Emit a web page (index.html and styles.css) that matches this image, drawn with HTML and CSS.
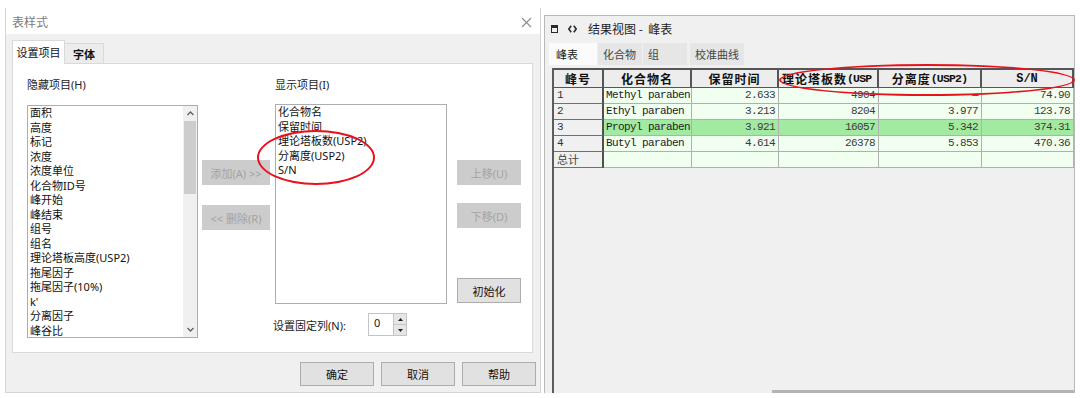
FILE: index.html
```html
<!DOCTYPE html>
<html lang="zh-CN">
<head>
  <meta charset="UTF-8" />
  <title>表样式 / 结果视图</title>
  <link rel="stylesheet" href="styles.css">
</head>
<body>
  <div class="shot">
    <div class="dialog">
      <div class="dlg-title">
        <span>表样式</span>
        <svg class="close" width="11" height="11" viewBox="0 0 11 11"><path d="M1 1L10 10M10 1L1 10" stroke="#8c8c8c" stroke-width="1.1" fill="none"/></svg>
      </div>
      <div class="dlg-body">
        <div class="tabs">
          <div class="tab active">设置项目</div>
          <div class="tab tab-font">字体</div>
        </div>
        <div class="panel">
          <div class="col col-hidden">
            <div class="lbl">隐藏项目(H)</div>
            <div class="listbox hidden-list">
              <ul class="items">
                <li>面积</li>
                <li>高度</li>
                <li>标记</li>
                <li>浓度</li>
                <li>浓度单位</li>
                <li>化合物ID号</li>
                <li>峰开始</li>
                <li>峰结束</li>
                <li>组号</li>
                <li>组名</li>
                <li>理论塔板高度(USP2)</li>
                <li>拖尾因子</li>
                <li>拖尾因子(10%)</li>
                <li>k'</li>
                <li>分离因子</li>
                <li>峰谷比</li>
              </ul>
              <div class="vscroll">
                <span class="arr"><svg width="7" height="5" viewBox="0 0 7 5"><path d="M0.5 4L3.5 1L6.5 4" stroke="#606060" stroke-width="1.3" fill="none"/></svg></span>
                <span class="thumb"></span>
                <span class="arr arr-down"><svg width="7" height="5" viewBox="0 0 7 5"><path d="M0.5 1L3.5 4L6.5 1" stroke="#606060" stroke-width="1.3" fill="none"/></svg></span>
              </div>
            </div>
          </div>

          <div class="col col-move">
            <button class="btn btn-off">添加(A) &gt;&gt;</button>
            <button class="btn btn-off btn-del">&lt;&lt; 删除(R)</button>
          </div>

          <div class="col col-shown">
            <div class="lbl">显示项目(I)</div>
            <div class="listbox shown-list">
              <ul class="items">
                <li>化合物名</li>
                <li>保留时间</li>
                <li>理论塔板数(USP2)</li>
                <li>分离度(USP2)</li>
                <li>S/N</li>
              </ul>
              <div class="mark mark-list"></div>
            </div>
            <div class="fixed-row">
              <span class="fixed-lbl">设置固定列(N):</span>
              <div class="spin">
                <span class="spin-val">0</span>
                <div class="spin-btns">
                  <span><svg width="5" height="3" viewBox="0 0 5 3"><path d="M0 3L2.5 0L5 3Z" fill="#222"/></svg></span>
                  <span><svg width="5" height="3" viewBox="0 0 5 3"><path d="M0 0L2.5 3L5 0Z" fill="#222"/></svg></span>
                </div>
              </div>
            </div>
          </div>

          <div class="col col-order">
            <button class="btn btn-off">上移(U)</button>
            <button class="btn btn-off btn-down">下移(D)</button>
            <button class="btn btn-init">初始化</button>
          </div>
        </div>
        <div class="dlg-foot">
          <button class="btn btn-foot">确定</button>
          <button class="btn btn-foot">取消</button>
          <button class="btn btn-foot">帮助</button>
        </div>
      </div>
    </div>

    <div class="results">
      <div class="res-title">
        <span class="win-icon"></span>
        <svg class="code-icon" width="9" height="8" viewBox="0 0 9 8"><path d="M3.2 0.8L0.8 4L3.2 7.2M5.8 0.8L8.2 4L5.8 7.2" stroke="#2a2a2a" stroke-width="1.6" fill="none"/></svg>
        <span class="res-name">结果视图 -&nbsp; 峰表</span>
      </div>
      <div class="res-tabs">
        <div class="rtab active">峰表</div>
        <div class="rtab">化合物</div>
        <div class="rtab">组</div>
        <div class="rtab rtab-cal">校准曲线</div>
      </div>
      <div class="grid-area">
        <div class="peak-table">
          <div class="trow thead">
            <div class="hc">峰号</div>
            <div class="hc">化合物名</div>
            <div class="hc">保留时间</div>
            <div class="hc hc-clip">理论塔板数<span class="lat">(USP</span></div>
            <div class="hc">分离度<span class="lat">(USP2)</span></div>
            <div class="hc"><span class="lat lat-sn">S/N</span></div>
          </div>
          <div class="trow">
            <div class="rh">1</div>
            <div class="dc name">Methyl paraben</div>
            <div class="dc">2.633</div>
            <div class="dc">4904</div>
            <div class="dc">—</div>
            <div class="dc">74.90</div>
          </div>
          <div class="trow">
            <div class="rh">2</div>
            <div class="dc name">Ethyl paraben</div>
            <div class="dc">3.213</div>
            <div class="dc">8204</div>
            <div class="dc">3.977</div>
            <div class="dc">123.78</div>
          </div>
          <div class="trow sel">
            <div class="rh">3</div>
            <div class="dc name">Propyl paraben</div>
            <div class="dc">3.921</div>
            <div class="dc">16057</div>
            <div class="dc">5.342</div>
            <div class="dc">374.31</div>
          </div>
          <div class="trow">
            <div class="rh">4</div>
            <div class="dc name">Butyl paraben</div>
            <div class="dc">4.614</div>
            <div class="dc">26378</div>
            <div class="dc">5.853</div>
            <div class="dc">470.36</div>
          </div>
          <div class="trow total">
            <div class="rh rh-cjk">总计</div>
            <div class="dc"></div>
            <div class="dc"></div>
            <div class="dc"></div>
            <div class="dc"></div>
            <div class="dc"></div>
          </div>
          <div class="mark mark-head"></div>
        </div>
        <div class="hscroll"></div>
      </div>
    </div>
  </div>
</body>
</html>
```

FILE: styles.css
```css
* {
  box-sizing: border-box;
}
body {
  margin: 0;
  background: #fff;
  font-family: "Noto Sans", "Noto Sans CJK SC", sans-serif;
  font-size: 11px;
  color: #1a1a1a;
}
ul {
  margin: 0;
  padding: 0;
  list-style: none;
}
.shot {
  display: flex;
  align-items: flex-start;
  width: 1080px;
  height: 398px;
  overflow: hidden;
}

/* ---- 表样式 dialog ---- */
.dialog {
  margin: 8px 0 0 5px;
  width: 536px;
  height: 385px;
  border: 1px solid #d4d4d4;
  border-top: none;
  display: flex;
  flex-direction: column;
}
.dlg-title {
  height: 26px;
  background: #fff;
  display: flex;
  align-items: center;
  padding: 2px 8px 0 6px;
  color: #7c7c7c;
  font-size: 12px;
}
.dlg-title .close {
  margin-left: auto;
}
.dlg-body {
  flex: 1;
  background: #f0f0f0;
  padding: 6px 6px 0 6px;
}
.tabs {
  display: flex;
  align-items: flex-end;
  height: 23px;
}
.tab {
  height: 20px;
  display: flex;
  align-items: center;
  justify-content: center;
  border: 1px solid #d9d9d9;
  border-bottom: none;
  color: #111;
}
.tab.active {
  width: 53px;
  height: 24px;
  margin-bottom: -1px;
  background: #fff;
  position: relative;
  z-index: 1;
  padding-bottom: 2px;
}
.tab-font {
  width: 39px;
  border-left: none;
  background: #ececec;
  font-weight: 600;
}
.panel {
  width: 521px;
  height: 290px;
  background: #fff;
  border: 1px solid #d9d9d9;
  padding: 14px 0 0 14px;
  display: flex;
  align-items: flex-start;
}
.col {
  display: flex;
  flex-direction: column;
}
.lbl {
  height: 14px;
  line-height: 14px;
  color: #222;
}
.listbox {
  border: 1px solid #abadb3;
  background: #fff;
  display: flex;
  position: relative;
}
.items {
  flex: 1;
  padding: 0 0 0 2px;
}
.items li {
  height: 14.5px;
  line-height: 14.5px;
  white-space: nowrap;
  color: #111;
}
.col-hidden {
  width: 171px;
}
.hidden-list {
  margin-top: 13px;
  height: 233px;
}
.vscroll {
  width: 14px;
  background: #f0f0f0;
  display: flex;
  flex-direction: column;
  align-items: center;
}
.arr {
  height: 15px;
  display: flex;
  align-items: center;
  justify-content: center;
}
.arr-down {
  margin-top: auto;
}
.thumb {
  width: 12px;
  height: 73px;
  background: #cdcdcd;
}
.btn {
  height: 25px;
  padding: 0;
  border: 1px solid #adadad;
  background: #e1e1e1;
  font-family: inherit;
  font-size: 11px;
  color: #111;
}
.btn-off {
  border-color: #cccccc;
  background: #cccccc;
  color: #a3a3a3;
}
.col-move {
  width: 68px;
  margin-left: 4px;
  padding-top: 82px;
}
.btn-del {
  margin-top: 20px;
}
.col-shown {
  width: 172px;
  margin-left: 5px;
}
.shown-list {
  margin-top: 12px;
  height: 200px;
}
.mark {
  position: absolute;
  border: 2px solid #e8121c;
  border-radius: 50%;
  pointer-events: none;
}
.mark-list {
  left: -19px;
  top: 25px;
  width: 118px;
  height: 55px;
}
.fixed-row {
  margin: 9px 0 0 -2px;
  display: flex;
  align-items: center;
  height: 23px;
}
.fixed-lbl {
  width: 95px;
  color: #222;
}
.spin {
  display: flex;
  height: 23px;
}
.spin-val {
  width: 25px;
  border: 1px solid #c4c4c4;
  border-right: none;
  background: #fff;
  padding: 1px 0 0 5px;
  line-height: 16px;
}
.spin-btns {
  width: 14px;
  display: flex;
  flex-direction: column;
  border: 1px solid #c4c4c4;
  background: #e6e6e6;
}
.spin-btns span {
  flex: 1;
  display: flex;
  align-items: center;
  justify-content: center;
}
.spin-btns span + span {
  border-top: 1px solid #c4c4c4;
}
.col-order {
  width: 64px;
  margin-left: 10px;
  padding-top: 82px;
}
.btn-down {
  margin-top: 18px;
}
.btn-init {
  margin-top: 50px;
}
.dlg-foot {
  margin: 9px -2px 0 0;
  display: flex;
  justify-content: flex-end;
  gap: 7px;
}
.btn-foot {
  width: 74px;
  height: 24px;
}

/* ---- 结果视图 ---- */
.results {
  margin: 15px 0 0 3px;
  width: 531px;
  height: 378px;
  background: #f0f0f0;
  border: 1px solid #b9b9b9;
  border-bottom: none;
  display: flex;
  flex-direction: column;
  font-family: "Liberation Mono", "Noto Sans CJK SC", monospace;
}
.res-title {
  height: 25px;
  display: flex;
  align-items: center;
  padding-left: 6px;
  font-family: "Noto Sans CJK SC", sans-serif;
  font-size: 12px;
  color: #1e1e1e;
}
.win-icon {
  width: 7px;
  height: 8px;
  border: 1px solid #2a2a2a;
  border-top-width: 3px;
}
.code-icon {
  margin-left: 10px;
}
.res-name {
  margin-left: 11px;
}
.res-tabs {
  margin-top: 2px;
  height: 22px;
  padding-left: 4px;
  display: flex;
  font-family: "Noto Sans CJK SC", sans-serif;
  font-size: 11px;
}
.rtab {
  width: 44px;
  margin-left: 1px;
  padding-left: 5px;
  display: flex;
  align-items: center;
  background: #e6e6e6;
  color: #444;
}
.rtab.active {
  width: 48px;
  margin-left: 0;
  padding-left: 7px;
  background: #fbfbfb;
  color: #222;
}
.rtab-cal {
  width: 54px;
  margin-left: 3px;
}
.grid-area {
  flex: 1;
  margin: 3px 0 0 7px;
  border-left: 2px solid #5c5c5c;
  display: flex;
  flex-direction: column;
}
.peak-table {
  width: 520px;
  position: relative;
}
.trow {
  display: grid;
  grid-template-columns: 50px 88px 87px 100px 103px 92px;
  height: 16px;
}
.thead {
  height: 20px;
}
.hc {
  background: #ededed;
  border-top: 2px solid #555;
  border-right: 2px solid #555;
  border-bottom: 1px solid #555;
  display: flex;
  align-items: center;
  justify-content: center;
  font-weight: 700;
  font-size: 12px;
  letter-spacing: 1px;
  color: #111;
  white-space: nowrap;
  overflow: hidden;
}
.hc .lat {
  font-size: 11.5px;
  letter-spacing: -0.8px;
}
.hc .lat-sn {
  font-size: 12px;
  letter-spacing: 0;
}
.hc-clip {
  justify-content: flex-start;
  padding-left: 3px;
}
.rh {
  background: #f0f0f0;
  border-right: 2px solid #505050;
  border-bottom: 1px solid #707070;
  padding-left: 3px;
  font-size: 11px;
  line-height: 15px;
  color: #333;
}
.rh-cjk {
  font-family: "Noto Sans CJK SC", sans-serif;
  color: #444;
}
.dc {
  background: #f0fff0;
  border-right: 1px solid #b0b0b0;
  border-bottom: 1px solid #b0b0b0;
  padding-right: 3px;
  text-align: right;
  font-size: 11px;
  letter-spacing: -0.6px;
  line-height: 15px;
  color: #3a3a3a;
  white-space: nowrap;
  overflow: hidden;
}
.dc.name {
  text-align: left;
  padding: 0 0 0 2px;
  color: #222;
}
.sel .dc {
  background: #a2eaa2;
}
.total {
  height: 15px;
}
.mark-head {
  left: 225px;
  top: -4px;
  width: 296px;
  height: 32px;
}
.hscroll {
  margin: auto 0 0 218px;
  width: 302px;
  height: 3px;
  background: #b4b4b4;
}
```
